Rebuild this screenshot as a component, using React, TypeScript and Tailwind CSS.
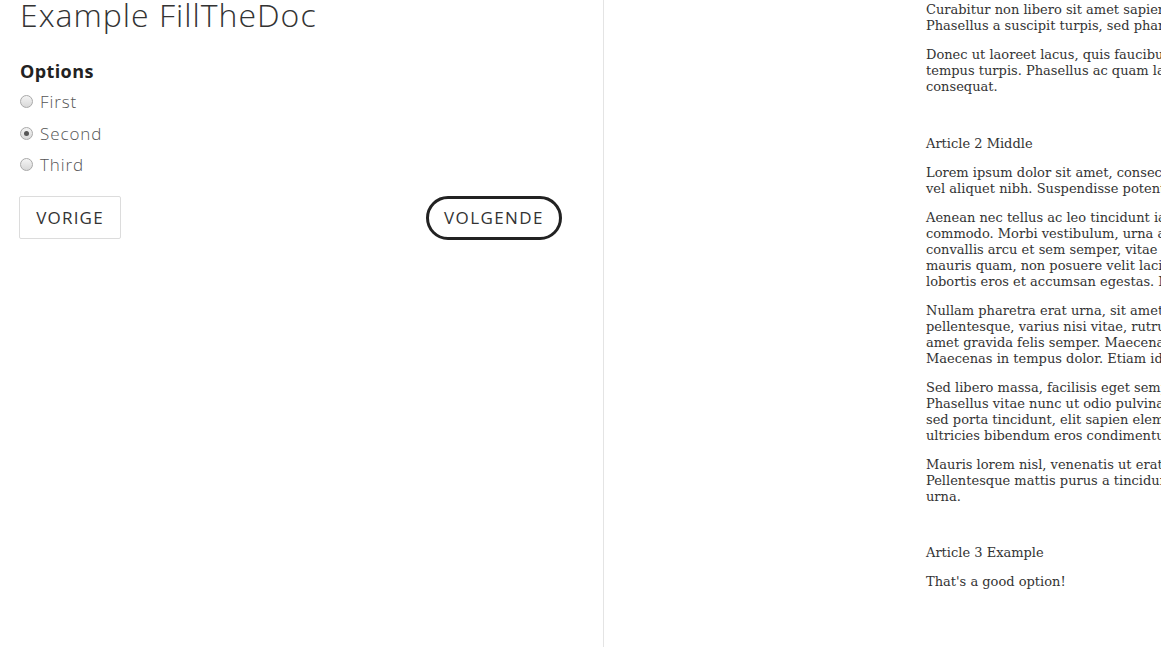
import { useState } from "react";

const options = ["First", "Second", "Third"];

const article: { type: "p" | "h"; lines: string[] }[] = [
  {
    type: "p",
    lines: [
      "Curabitur non libero sit amet sapien dictum pellentesque.",
      "Phasellus a suscipit turpis, sed pharetra nisi.",
    ],
  },
  {
    type: "p",
    lines: [
      "Donec ut laoreet lacus, quis faucibus lorem. Nulla facilisi.",
      "tempus turpis. Phasellus ac quam laoreet, dictum velit",
      "consequat.",
    ],
  },
  { type: "h", lines: ["Article 2 Middle"] },
  {
    type: "p",
    lines: [
      "Lorem ipsum dolor sit amet, consectetur adipiscing elit.",
      "vel aliquet nibh. Suspendisse potenti.",
    ],
  },
  {
    type: "p",
    lines: [
      "Aenean nec tellus ac leo tincidunt iaculis. Nam eget",
      "commodo. Morbi vestibulum, urna a laoreet pretium,",
      "convallis arcu et sem semper, vitae tincidunt lorem",
      "mauris quam, non posuere velit lacinia sit amet.",
      "lobortis eros et accumsan egestas. Morbi vel nulla.",
    ],
  },
  {
    type: "p",
    lines: [
      "Nullam pharetra erat urna, sit amet dictum nisl",
      "pellentesque, varius nisi vitae, rutrum ante. Sit",
      "amet gravida felis semper. Maecenas at ligula.",
      "Maecenas in tempus dolor. Etiam id nisl vel.",
    ],
  },
  {
    type: "p",
    lines: [
      "Sed libero massa, facilisis eget semper a, luctus",
      "Phasellus vitae nunc ut odio pulvinar mattis.",
      "sed porta tincidunt, elit sapien elementum dui,",
      "ultricies bibendum eros condimentum a.",
    ],
  },
  {
    type: "p",
    lines: [
      "Mauris lorem nisl, venenatis ut erat et, finibus",
      "Pellentesque mattis purus a tincidunt faucibus",
      "urna.",
    ],
  },
  { type: "h", lines: ["Article 3 Example"] },
  { type: "p", lines: ["That's a good option!"] },
];

function Radio({ checked }: { checked: boolean }) {
  return (
    <span className="flex h-[13px] w-[13px] items-center justify-center rounded-full border border-[#a9a9a9] bg-gradient-to-b from-[#f4f4f4] to-[#d8d8d8]">
      {checked && <span className="h-[5px] w-[5px] rounded-full bg-[#555]" />}
    </span>
  );
}

export default function App() {
  const [selected, setSelected] = useState("Second");

  return (
    <div className="flex h-[647px] w-full overflow-hidden bg-white">
      <div className="w-[604px] shrink-0 border-r border-[#e4e4e4] px-5 font-['Open_Sans',sans-serif] text-[#333]">
        <h1 className="mt-[-5px] text-[32px] font-light leading-[40px] tracking-[1px] text-[#333]">
          Example FillTheDoc
        </h1>
        <h3 className="mt-[24px] text-[18px] font-bold leading-[24px] tracking-[0.4px] text-[#222]">
          Options
        </h3>
        <div className="mt-[3px] flex flex-col">
          {options.map((o) => (
            <label
              key={o}
              onClick={() => setSelected(o)}
              className="flex h-[31.5px] cursor-pointer items-center gap-[7px] text-[17px] font-light tracking-[0.9px] text-[#555]"
            >
              <Radio checked={selected === o} />
              <span>{o}</span>
            </label>
          ))}
        </div>
        <div className="mt-[15px] flex items-center justify-between pr-[21px]">
          <button className="ml-[-1px] h-[43px] w-[102px] rounded-[2px] border border-[#dcdcdc] text-[17px] font-normal tracking-[1.2px] text-[#333]">
            VORIGE
          </button>
          <button className="h-[44px] w-[136px] rounded-full border-[3px] border-[#222] text-[17px] font-normal tracking-[1.4px] text-[#333]">
            VOLGENDE
          </button>
        </div>
      </div>
      <div className="min-w-0 flex-1 overflow-hidden pl-[322px] font-['DejaVu_Serif',serif] text-[13px] leading-[16px] text-[#333]">
        <div className="mt-[2px] flex w-[420px] flex-col">
          {article.map((b, i) => (
            <div
              key={i}
              className={
                b.type === "h"
                  ? "mt-[40.5px] whitespace-nowrap"
                  : i === 0
                    ? "whitespace-nowrap"
                    : "mt-[13px] whitespace-nowrap"
              }
            >
              {b.lines.map((l, j) => (
                <div key={j}>{l}</div>
              ))}
            </div>
          ))}
        </div>
      </div>
    </div>
  );
}
